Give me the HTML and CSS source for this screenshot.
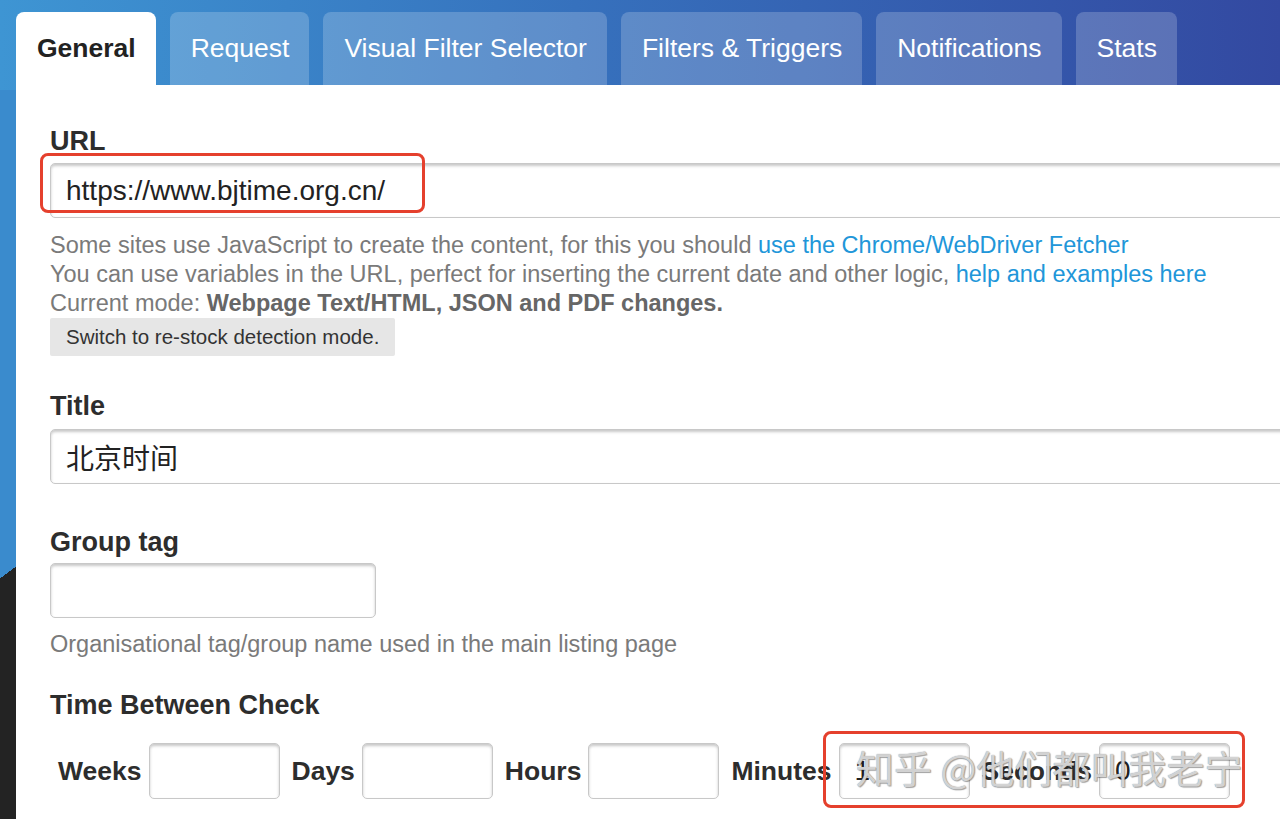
FILE: index.html
```html
<!DOCTYPE html>
<html lang="en">
<head>
    <meta charset="UTF-8">
    <meta name="viewport" content="width=device-width, initial-scale=1.0">
    <title>Edit watch - General</title>
    <link rel="stylesheet" href="styles.css">
</head>
<body>
    <div class="page">
        <ul class="tabs">
            <li class="active">General</li>
            <li>Request</li>
            <li>Visual Filter Selector</li>
            <li>Filters &amp; Triggers</li>
            <li>Notifications</li>
            <li>Stats</li>
        </ul>

        <div class="panel">
            <div class="field">
                <label>URL</label>
                <input type="text" class="text wide" value="https://www.bjtime.org.cn/">
                <div class="help">
                    Some sites use JavaScript to create the content, for this you should <a href="#">use the Chrome/WebDriver Fetcher</a><br>
                    You can use variables in the URL, perfect for inserting the current date and other logic, <a href="#">help and examples here</a><br>
                    Current mode: <strong>Webpage Text/HTML, JSON and PDF changes.</strong>
                </div>
                <button type="button" class="btn">Switch to re-stock detection mode.</button>
            </div>

            <div class="field title">
                <label>Title</label>
                <input type="text" class="text wide" value="北京时间">
            </div>

            <div class="field group">
                <label>Group tag</label>
                <input type="text" class="text short" value="">
                <div class="help">Organisational tag/group name used in the main listing page</div>
            </div>

            <div class="field time">
                <label>Time Between Check</label>
                <div class="time-row">
                    <span>Weeks</span><input type="text" class="text num">
                    <span>Days</span><input type="text" class="text num">
                    <span>Hours</span><input type="text" class="text num">
                    <span>Minutes</span><input type="text" class="text num" value="1">
                    <span>Seconds</span><input type="text" class="text num" value="0">
                </div>
            </div>
        </div>

        <div class="mark mark-url"></div>
        <div class="mark mark-time"></div>
        <div class="watermark">知乎 @他们都叫我老宁</div>
    </div>
</body>
</html>
```

FILE: styles.css
```css
html, body {
    margin: 0;
    height: 100%;
    overflow: hidden;
}
body {
    font-family: "Liberation Sans", Helvetica, Arial, "Noto Sans CJK SC", sans-serif;
    color: #333;
    background:
        linear-gradient(90deg, #3e95d3 0%, #3671bd 45%, #3349a1 100%) top / 100% 90px no-repeat,
        linear-gradient(143deg, #3a8bcd 462px, #232323 462px);
}
.page {
    position: relative;
    padding: 12px 0 0 16px;
    height: 100%;
    box-sizing: border-box;
}
.tabs {
    display: flex;
    gap: 14px;
    margin: 0;
    padding: 0;
    list-style: none;
}
.tabs li {
    height: 73px;
    line-height: 73px;
    padding: 0 20px 0 21px;
    font-size: 26.5px;
    color: #fff;
    background: rgba(255, 255, 255, 0.2);
    border-radius: 8px 8px 0 0;
}
.tabs li.active {
    background: #fff;
    color: #222;
    font-weight: bold;
}
.panel {
    background: #fff;
    padding: 41px 0 0 34px;
    height: 100%;
}
.field label {
    display: block;
    font-size: 27px;
    line-height: 30px;
    font-weight: bold;
    color: #2d2d2d;
    margin-bottom: 7px;
}
.text {
    display: block;
    box-sizing: border-box;
    height: 55px;
    padding: 0 15px;
    font-family: "Liberation Sans", Helvetica, Arial, "Noto Sans CJK SC", sans-serif;
    font-size: 28px;
    color: #222;
    background: #fff;
    border: 1px solid #c8c8c8;
    border-radius: 5px;
    box-shadow: inset 0 2px 3px rgba(0, 0, 0, 0.22);
}
.wide {
    width: 1260px;
}
.short {
    width: 326px;
}
.help {
    margin-top: 13px;
    font-size: 23.5px;
    line-height: 29px;
    color: #7a7a7a;
}
.help a {
    color: #2196d9;
    text-decoration: none;
}
.help strong {
    color: #666;
}
.btn {
    display: block;
    margin-top: 0;
    height: 38px;
    padding: 0 16px;
    border: none;
    border-radius: 2px;
    background: #e6e6e6;
    color: #333;
    font-family: "Liberation Sans", Helvetica, Arial, sans-serif;
    font-size: 20.5px;
}
.title {
    margin-top: 35px;
}
.title label {
    margin-bottom: 8px;
}
.group {
    margin-top: 43px;
}
.group label {
    margin-bottom: 6px;
}
.group .help {
    margin-top: 12px;
}
.time {
    margin-top: 31px;
}
.time-row {
    display: flex;
    align-items: center;
    margin-top: 23px;
    padding-left: 8px;
}
.time-row span {
    font-size: 26.5px;
    font-weight: bold;
    color: #2d2d2d;
    margin-right: 7px;
}
.time-row .num {
    width: 131px;
    height: 56px;
    margin-right: 12px;
}
.mark {
    position: absolute;
    border: 3px solid #e5402d;
    border-radius: 8px;
}
.mark-url {
    left: 40px;
    top: 153px;
    width: 379px;
    height: 54px;
}
.mark-time {
    left: 823px;
    top: 731px;
    width: 416px;
    height: 71px;
}
.watermark {
    position: absolute;
    left: 856px;
    top: 745px;
    font-family: "Noto Sans CJK SC", sans-serif;
    font-size: 38px;
    line-height: 44px;
    color: rgba(240, 240, 240, 0.75);
    text-shadow: 0 0 1px #777, 1px 1px 1px rgba(0, 0, 0, 0.35);
    white-space: nowrap;
}
```
